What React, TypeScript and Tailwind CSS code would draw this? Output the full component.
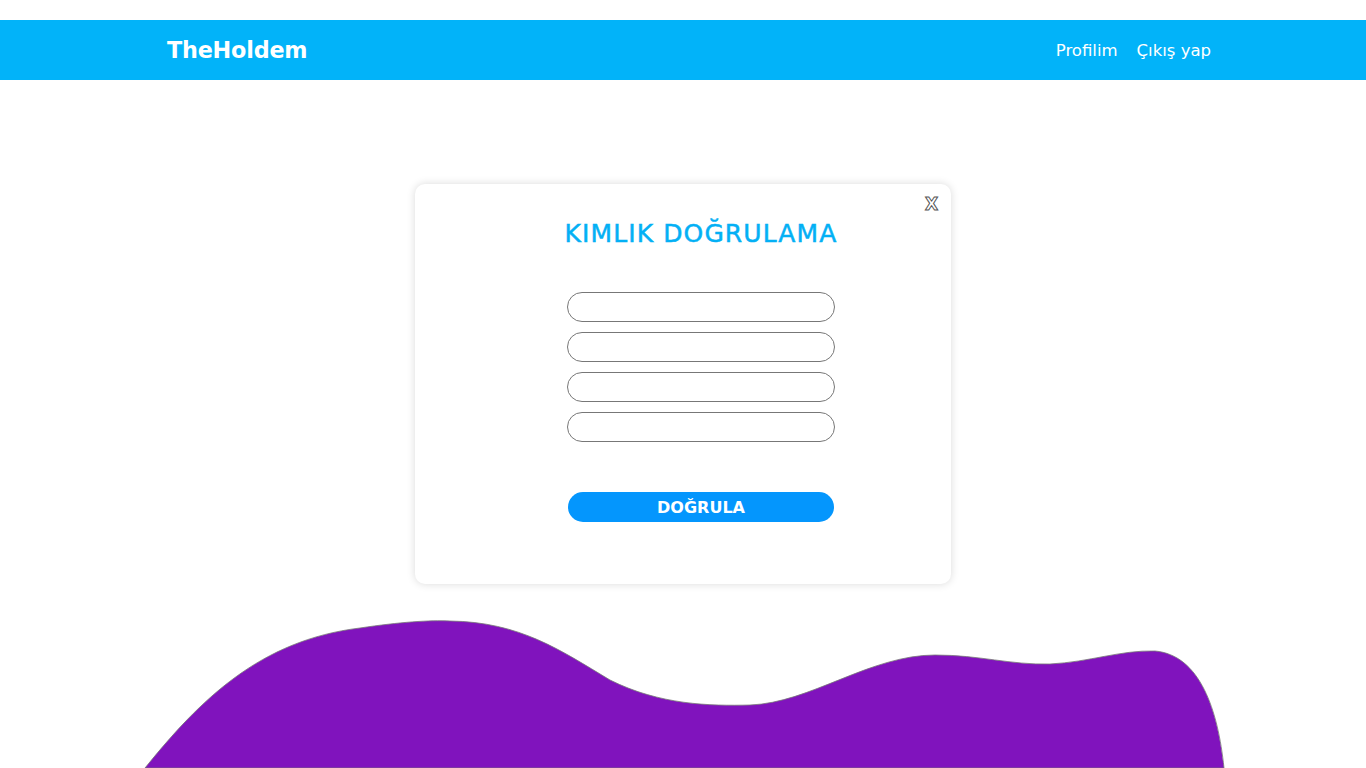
const NAV_LINKS = ['Profilim', 'Çıkış yap'];

function Blob() {
  return (
    <svg
      className="block mt-[16px] shrink-0"
      width="1366"
      height="168"
      viewBox="0 600 1366 168"
    >
      <path
        d="M145,768 C200,700 260,640 360,628 C400,622 430,620 450,621 C520,622 560,650 610,680 C660,705 710,706 750,705 C810,703 870,655 935,655 C980,655 1010,665 1050,664 C1090,662 1120,650 1155,651 C1200,655 1218,710 1224,768 Z"
        fill="#8013bd"
        stroke="#777"
        strokeWidth="0.8"
      />
    </svg>
  );
}

export default function App() {
  return (
    <div className="h-[768px] overflow-hidden bg-white pt-[20px] flex flex-col font-['DejaVu_Sans',sans-serif]">
      {/* Header */}
      <header className="h-[60px] bg-[#02b3f9] shrink-0">
        <div className="h-full flex items-center justify-between pl-[167px] pr-[155px] pt-[2px]">
          <span className="text-white font-bold text-[22.3px] tracking-[-0.2px]">TheHoldem</span>
          <nav className="flex items-center gap-[19px]">
            {NAV_LINKS.map((l) => (
              <a key={l} className="text-white text-[16.5px]">
                {l}
              </a>
            ))}
          </nav>
        </div>
      </header>

      {/* Verification card */}
      <div className="relative mt-[104px] mx-auto w-[536px] h-[400px] shrink-0 bg-white rounded-[10px] shadow-[0_0_8px_rgba(0,0,0,0.15)] pl-[36px] pt-[33px] flex flex-col items-center">
        <button className="absolute right-[13px] top-[12px] text-[17px] leading-none text-white [-webkit-text-stroke:1px_#555] font-bold">
          X
        </button>
        <h1 className="text-[#03b0f5] text-[25px] leading-[34px] tracking-[1.1px] [-webkit-text-stroke:0.5px_#03b0f5]">
          KIMLIK DOĞRULAMA
        </h1>
        <div className="mt-[41px] flex flex-col gap-[10px]">
          {[0, 1, 2, 3].map((i) => (
            <input
              key={i}
              className="w-[268px] h-[30px] rounded-full border border-[#777] bg-white outline-none px-3"
            />
          ))}
        </div>
        <button className="mt-[50px] w-[266px] h-[30px] rounded-full bg-[#0496fd] text-white font-bold text-[16px] pt-[1px]">
          DOĞRULA
        </button>
      </div>

      <Blob />
    </div>
  );
}
